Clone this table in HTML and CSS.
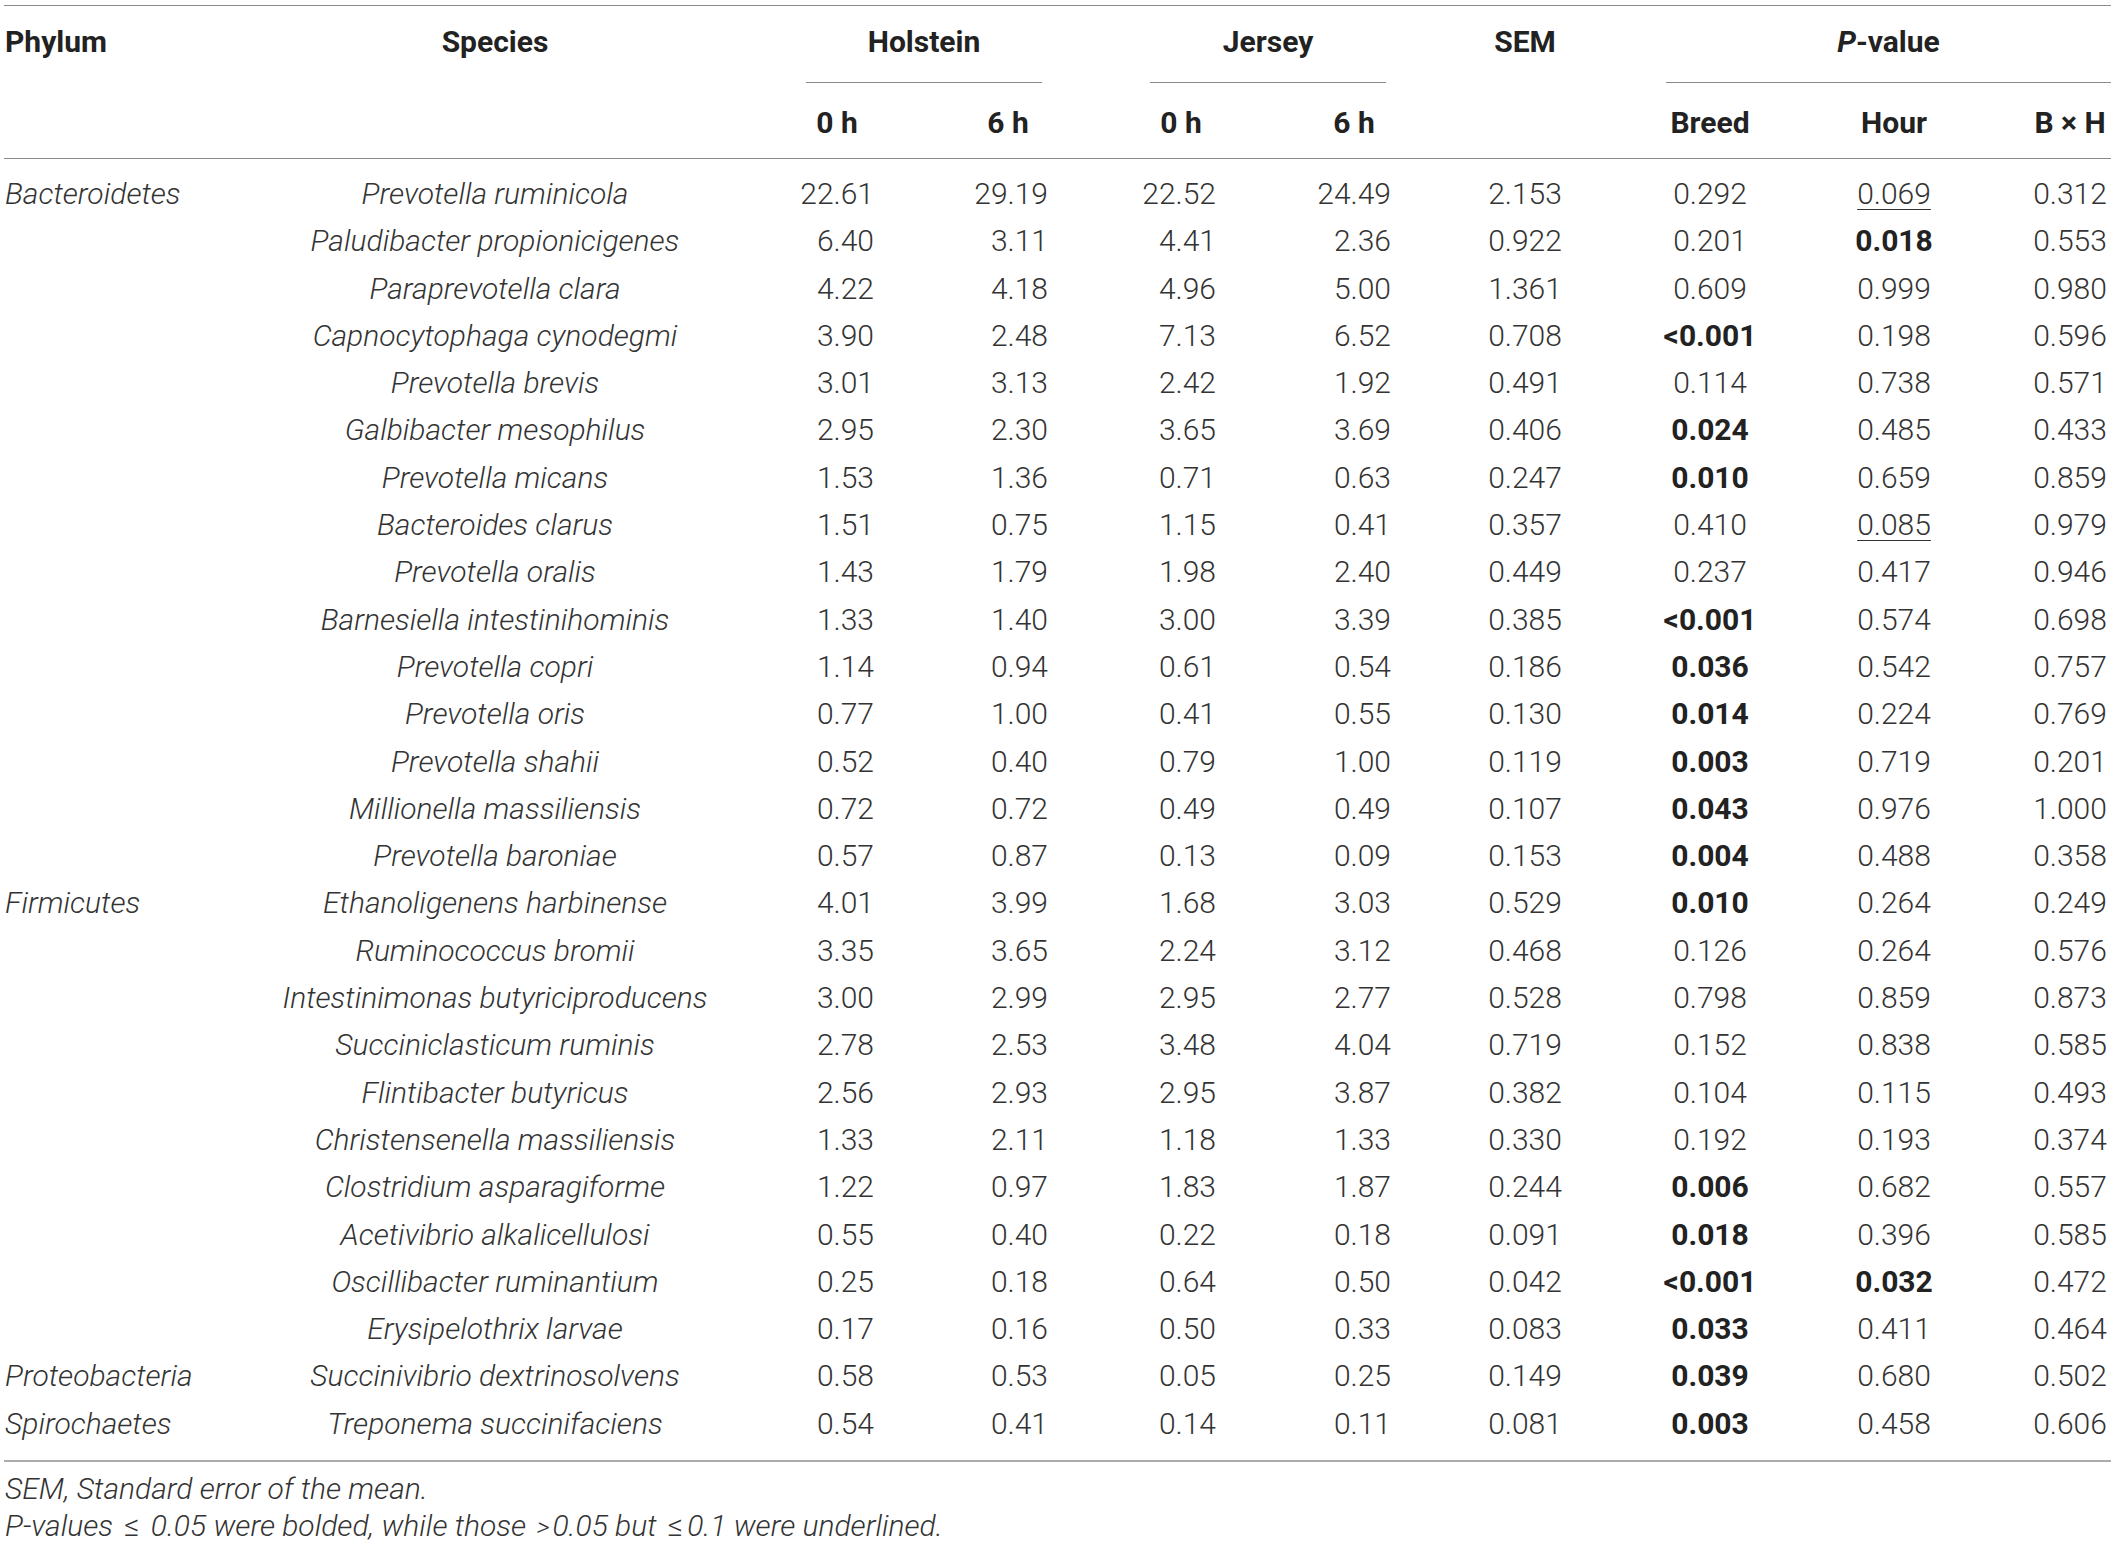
FILE: index.html
```html
<!DOCTYPE html>
<html lang="en">
<head>
<meta charset="utf-8">
<title>Species table</title>
<link rel="stylesheet" href="styles.css">
</head>
<body>
<div class="page">
<table class="data">
  <colgroup>
    <col class="w-ph"><col class="w-sp"><col class="w-h0"><col class="w-h6"><col class="w-j0"><col class="w-j6"><col class="w-sem"><col class="w-br"><col class="w-hr"><col class="w-bh">
  </colgroup>
  <thead>
    <tr class="hr1">
      <th class="ph">Phylum</th>
      <th class="sp">Species</th>
      <th colspan="2"><div class="grp g-hol">Holstein</div></th>
      <th colspan="2"><div class="grp g-jer">Jersey</div></th>
      <th>SEM</th>
      <th colspan="3"><div class="grp g-pv"><i>P</i>-value</div></th>
    </tr>
    <tr class="hr2">
      <th></th>
      <th></th>
      <th>0 h</th>
      <th>6 h</th>
      <th>0 h</th>
      <th>6 h</th>
      <th></th>
      <th>Breed</th>
      <th>Hour</th>
      <th class="bh">B × H</th>
    </tr>
  </thead>
  <tbody>
    <tr><td class="ph">Bacteroidetes</td><td class="sp">Prevotella ruminicola</td><td class="h0">22.61</td><td class="h6">29.19</td><td class="j0">22.52</td><td class="j6">24.49</td><td class="c">2.153</td><td class="c">0.292</td><td class="c"><span class="u">0.069</span></td><td class="c bh">0.312</td></tr>
    <tr><td class="ph"></td><td class="sp">Paludibacter propionicigenes</td><td class="h0">6.40</td><td class="h6">3.11</td><td class="j0">4.41</td><td class="j6">2.36</td><td class="c">0.922</td><td class="c">0.201</td><td class="c"><b>0.018</b></td><td class="c bh">0.553</td></tr>
    <tr><td class="ph"></td><td class="sp">Paraprevotella clara</td><td class="h0">4.22</td><td class="h6">4.18</td><td class="j0">4.96</td><td class="j6">5.00</td><td class="c">1.361</td><td class="c">0.609</td><td class="c">0.999</td><td class="c bh">0.980</td></tr>
    <tr><td class="ph"></td><td class="sp">Capnocytophaga cynodegmi</td><td class="h0">3.90</td><td class="h6">2.48</td><td class="j0">7.13</td><td class="j6">6.52</td><td class="c">0.708</td><td class="c"><b>&lt;0.001</b></td><td class="c">0.198</td><td class="c bh">0.596</td></tr>
    <tr><td class="ph"></td><td class="sp">Prevotella brevis</td><td class="h0">3.01</td><td class="h6">3.13</td><td class="j0">2.42</td><td class="j6">1.92</td><td class="c">0.491</td><td class="c">0.114</td><td class="c">0.738</td><td class="c bh">0.571</td></tr>
    <tr><td class="ph"></td><td class="sp">Galbibacter mesophilus</td><td class="h0">2.95</td><td class="h6">2.30</td><td class="j0">3.65</td><td class="j6">3.69</td><td class="c">0.406</td><td class="c"><b>0.024</b></td><td class="c">0.485</td><td class="c bh">0.433</td></tr>
    <tr><td class="ph"></td><td class="sp">Prevotella micans</td><td class="h0">1.53</td><td class="h6">1.36</td><td class="j0">0.71</td><td class="j6">0.63</td><td class="c">0.247</td><td class="c"><b>0.010</b></td><td class="c">0.659</td><td class="c bh">0.859</td></tr>
    <tr><td class="ph"></td><td class="sp">Bacteroides clarus</td><td class="h0">1.51</td><td class="h6">0.75</td><td class="j0">1.15</td><td class="j6">0.41</td><td class="c">0.357</td><td class="c">0.410</td><td class="c"><span class="u">0.085</span></td><td class="c bh">0.979</td></tr>
    <tr><td class="ph"></td><td class="sp">Prevotella oralis</td><td class="h0">1.43</td><td class="h6">1.79</td><td class="j0">1.98</td><td class="j6">2.40</td><td class="c">0.449</td><td class="c">0.237</td><td class="c">0.417</td><td class="c bh">0.946</td></tr>
    <tr><td class="ph"></td><td class="sp">Barnesiella intestinihominis</td><td class="h0">1.33</td><td class="h6">1.40</td><td class="j0">3.00</td><td class="j6">3.39</td><td class="c">0.385</td><td class="c"><b>&lt;0.001</b></td><td class="c">0.574</td><td class="c bh">0.698</td></tr>
    <tr><td class="ph"></td><td class="sp">Prevotella copri</td><td class="h0">1.14</td><td class="h6">0.94</td><td class="j0">0.61</td><td class="j6">0.54</td><td class="c">0.186</td><td class="c"><b>0.036</b></td><td class="c">0.542</td><td class="c bh">0.757</td></tr>
    <tr><td class="ph"></td><td class="sp">Prevotella oris</td><td class="h0">0.77</td><td class="h6">1.00</td><td class="j0">0.41</td><td class="j6">0.55</td><td class="c">0.130</td><td class="c"><b>0.014</b></td><td class="c">0.224</td><td class="c bh">0.769</td></tr>
    <tr><td class="ph"></td><td class="sp">Prevotella shahii</td><td class="h0">0.52</td><td class="h6">0.40</td><td class="j0">0.79</td><td class="j6">1.00</td><td class="c">0.119</td><td class="c"><b>0.003</b></td><td class="c">0.719</td><td class="c bh">0.201</td></tr>
    <tr><td class="ph"></td><td class="sp">Millionella massiliensis</td><td class="h0">0.72</td><td class="h6">0.72</td><td class="j0">0.49</td><td class="j6">0.49</td><td class="c">0.107</td><td class="c"><b>0.043</b></td><td class="c">0.976</td><td class="c bh">1.000</td></tr>
    <tr><td class="ph"></td><td class="sp">Prevotella baroniae</td><td class="h0">0.57</td><td class="h6">0.87</td><td class="j0">0.13</td><td class="j6">0.09</td><td class="c">0.153</td><td class="c"><b>0.004</b></td><td class="c">0.488</td><td class="c bh">0.358</td></tr>
    <tr><td class="ph">Firmicutes</td><td class="sp">Ethanoligenens harbinense</td><td class="h0">4.01</td><td class="h6">3.99</td><td class="j0">1.68</td><td class="j6">3.03</td><td class="c">0.529</td><td class="c"><b>0.010</b></td><td class="c">0.264</td><td class="c bh">0.249</td></tr>
    <tr><td class="ph"></td><td class="sp">Ruminococcus bromii</td><td class="h0">3.35</td><td class="h6">3.65</td><td class="j0">2.24</td><td class="j6">3.12</td><td class="c">0.468</td><td class="c">0.126</td><td class="c">0.264</td><td class="c bh">0.576</td></tr>
    <tr><td class="ph"></td><td class="sp">Intestinimonas butyriciproducens</td><td class="h0">3.00</td><td class="h6">2.99</td><td class="j0">2.95</td><td class="j6">2.77</td><td class="c">0.528</td><td class="c">0.798</td><td class="c">0.859</td><td class="c bh">0.873</td></tr>
    <tr><td class="ph"></td><td class="sp">Succiniclasticum ruminis</td><td class="h0">2.78</td><td class="h6">2.53</td><td class="j0">3.48</td><td class="j6">4.04</td><td class="c">0.719</td><td class="c">0.152</td><td class="c">0.838</td><td class="c bh">0.585</td></tr>
    <tr><td class="ph"></td><td class="sp">Flintibacter butyricus</td><td class="h0">2.56</td><td class="h6">2.93</td><td class="j0">2.95</td><td class="j6">3.87</td><td class="c">0.382</td><td class="c">0.104</td><td class="c">0.115</td><td class="c bh">0.493</td></tr>
    <tr><td class="ph"></td><td class="sp">Christensenella massiliensis</td><td class="h0">1.33</td><td class="h6">2.11</td><td class="j0">1.18</td><td class="j6">1.33</td><td class="c">0.330</td><td class="c">0.192</td><td class="c">0.193</td><td class="c bh">0.374</td></tr>
    <tr><td class="ph"></td><td class="sp">Clostridium asparagiforme</td><td class="h0">1.22</td><td class="h6">0.97</td><td class="j0">1.83</td><td class="j6">1.87</td><td class="c">0.244</td><td class="c"><b>0.006</b></td><td class="c">0.682</td><td class="c bh">0.557</td></tr>
    <tr><td class="ph"></td><td class="sp">Acetivibrio alkalicellulosi</td><td class="h0">0.55</td><td class="h6">0.40</td><td class="j0">0.22</td><td class="j6">0.18</td><td class="c">0.091</td><td class="c"><b>0.018</b></td><td class="c">0.396</td><td class="c bh">0.585</td></tr>
    <tr><td class="ph"></td><td class="sp">Oscillibacter ruminantium</td><td class="h0">0.25</td><td class="h6">0.18</td><td class="j0">0.64</td><td class="j6">0.50</td><td class="c">0.042</td><td class="c"><b>&lt;0.001</b></td><td class="c"><b>0.032</b></td><td class="c bh">0.472</td></tr>
    <tr><td class="ph"></td><td class="sp">Erysipelothrix larvae</td><td class="h0">0.17</td><td class="h6">0.16</td><td class="j0">0.50</td><td class="j6">0.33</td><td class="c">0.083</td><td class="c"><b>0.033</b></td><td class="c">0.411</td><td class="c bh">0.464</td></tr>
    <tr><td class="ph">Proteobacteria</td><td class="sp">Succinivibrio dextrinosolvens</td><td class="h0">0.58</td><td class="h6">0.53</td><td class="j0">0.05</td><td class="j6">0.25</td><td class="c">0.149</td><td class="c"><b>0.039</b></td><td class="c">0.680</td><td class="c bh">0.502</td></tr>
    <tr><td class="ph">Spirochaetes</td><td class="sp">Treponema succinifaciens</td><td class="h0">0.54</td><td class="h6">0.41</td><td class="j0">0.14</td><td class="j6">0.11</td><td class="c">0.081</td><td class="c"><b>0.003</b></td><td class="c">0.458</td><td class="c bh">0.606</td></tr>
  </tbody>
</table>
<div class="notes">
  <p>SEM, Standard error of the mean.</p>
  <p>P-values <span class="le">≤</span> 0.05 were bolded, while those <span class="gt">&gt;</span>0.05 but <span class="le">≤</span>0.1 were underlined.</p>
</div>
</div>
</body>
</html>
```

FILE: styles.css
```css
html, body {
  margin: 0;
  padding: 0;
  background: #ffffff;
}

body {
  font-family: Roboto, "Liberation Sans", Arial, sans-serif;
  color: #333333;
}

.page {
  padding: 5px 6px 0 4px;
}

.data {
  width: 2107px;
  table-layout: fixed;
  border-collapse: separate;
  border-spacing: 0;
  font-size: 30px;
  font-weight: 300;
}

.w-ph { width: 246px; }
.w-sp { width: 490px; }
.w-h0 { width: 194px; }
.w-h6 { width: 148px; }
.w-j0 { width: 198px; }
.w-j6 { width: 148px; }
.w-sem { width: 194px; }
.w-br { width: 176px; }
.w-hr { width: 192px; }
.w-bh { width: 121px; }

th {
  font-weight: 700;
  color: #222222;
  text-align: center;
  vertical-align: top;
  line-height: 34px;
  padding: 0;
}

.hr1 th {
  border-top: 1px solid #8a8a8a;
  padding-top: 19px;
}

.hr1 th.ph {
  text-align: left;
  padding-left: 1px;
}

.grp {
  padding-bottom: 23px;
  border-bottom: 1px solid #8a8a8a;
}

.g-hol { margin: 0 40px 0 66px; }
.g-jer { margin: 0 42px 0 68px; }
.g-pv { margin: 0 0 0 44px; }

.grp i {
  font-style: italic;
}

.hr2 th {
  padding-top: 23px;
  padding-bottom: 18px;
  border-bottom: 1px solid #8a8a8a;
}

th.bh {
  padding-left: 39px;
}

td {
  padding: 0;
  line-height: 47.3px;
  white-space: nowrap;
  color: #333333;
}

tbody tr:first-child td {
  padding-top: 11px;
}

tbody tr:last-child td {
  padding-bottom: 13px;
  border-bottom: 2px solid #ababab;
}

td.ph {
  font-style: italic;
  text-align: left;
  padding-left: 1px;
}

td.sp {
  font-style: italic;
  text-align: center;
}

td.h0 { text-align: right; padding-right: 60px; }
td.h6 { text-align: right; padding-right: 34px; }
td.j0 { text-align: right; padding-right: 64px; }
td.j6 { text-align: right; padding-right: 37px; }

td.c {
  text-align: center;
}

td.bh {
  padding-left: 39px;
}

td b {
  font-weight: 700;
  color: #222222;
}

.u {
  text-decoration: underline;
  text-decoration-thickness: 1px;
  text-underline-offset: 5px;
}

.notes {
  padding-top: 8px;
  padding-left: 1px;
  font-size: 30px;
  font-weight: 300;
  font-style: italic;
  line-height: 37px;
  color: #333333;
}

.notes p {
  margin: 0;
}

.notes .le {
  display: inline-block;
  margin: 0 4px;
  font-style: normal;
}

.notes .gt {
  display: inline-block;
  margin: 0 3px;
  font-size: 26px;
}
```
